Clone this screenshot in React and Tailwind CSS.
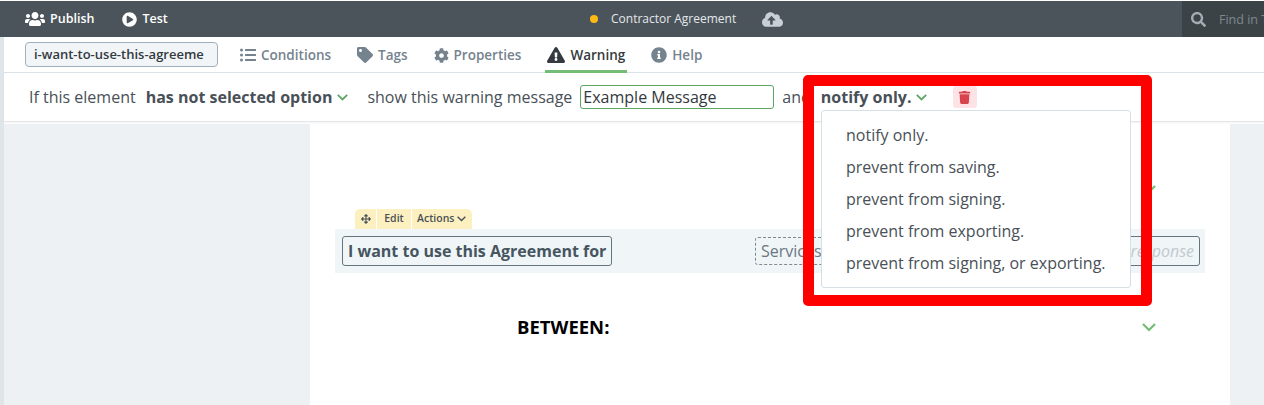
import { FaUsers, FaPlayCircle, FaCloudUploadAlt, FaSearch, FaListUl, FaTag, FaCog, FaExclamationTriangle, FaInfoCircle, FaTrash, FaArrowsAlt } from "react-icons/fa";

const Chev = ({ className }) => (
  <svg viewBox="0 0 14 9" className={className} fill="none" stroke="currentColor" strokeWidth="2.2"><path d="M1 1l6 6 6-6" /></svg>
);

function Tab({ icon, label, active }) {
  return (
    <div className={`flex h-[36px] items-center gap-[5px] px-[2px] pt-[4px] border-b-[3px] ${active ? "border-[#73bd77] text-[#343a40]" : "border-transparent text-[#75838f]"}`}>
      {icon}
      <span className="text-[13.5px] font-semibold">{label}</span>
    </div>
  );
}

const options = ["notify only.", "prevent from saving.", "prevent from signing.", "prevent from exporting.", "prevent from signing, or exporting."];

export default function App() {
  return (
    <div className="relative h-[405px] w-[1264px] overflow-hidden bg-white font-['Open_Sans',sans-serif] text-[#495057]">
      <header className="mt-px flex h-[36px] items-center bg-[#4c545b] text-white">
        <div className="flex w-[590px] items-center">
          <FaUsers className="ml-[25px] text-[20px]" />
          <span className="ml-[5px] text-[12.5px] font-semibold">Publish</span>
          <FaPlayCircle className="ml-[28px] text-[15px]" />
          <span className="ml-[5px] text-[12.5px] font-semibold">Test</span>
        </div>
        <div className="flex flex-1 items-center text-[#e4e8eb]">
          <span className="h-[8px] w-[8px] rounded-full bg-[#fdb913]" />
          <span className="ml-[13px] text-[12px]">Contractor Agreement</span>
          <FaCloudUploadAlt className="ml-[26px] text-[21px] text-[#c9d0d5]" />
        </div>
        <div className="flex h-full w-[82px] items-center overflow-hidden bg-[#3c4347] pl-[9px]">
          <FaSearch className="shrink-0 text-[15px] text-[#a3adb5]" />
          <span className="mt-[3px] ml-[13px] whitespace-nowrap text-[12.5px] text-[#7e888f]">Find in T</span>
        </div>
      </header>

      <div className="flex h-[calc(100%-37px)]">
        <div className="w-[4px] shrink-0 bg-[#dfe6ea]" />
        <div className="flex min-w-0 flex-1 flex-col">
          <div className="flex h-[36px] shrink-0 items-center border-b border-[#dbe3e8]">
            <div className="ml-[21px] flex h-[25px] w-[193px] items-center overflow-hidden rounded-[4px] border border-[#9fb0bd] bg-[#f1f5f8] pl-[8px] text-[13px] font-semibold whitespace-nowrap text-[#343a40]">
              i-want-to-use-this-agreeme
            </div>
            <div className="ml-[20px] flex items-center gap-[22px]">
              <Tab icon={<FaListUl className="text-[16px]" />} label="Conditions" />
              <Tab icon={<FaTag className="text-[16px]" />} label="Tags" />
              <Tab icon={<FaCog className="text-[15px]" />} label="Properties" />
              <Tab active icon={<FaExclamationTriangle className="text-[18px]" />} label="Warning" />
              <Tab icon={<FaInfoCircle className="text-[16px]" />} label="Help" />
            </div>
          </div>

          <div className="flex h-[49px] shrink-0 items-center border-b border-[#e3e5e7] pl-[25px] text-[16px] whitespace-nowrap shadow-[0_1px_2px_rgba(0,0,0,0.05)]">
            <span>If this element</span>
            <span className="ml-[10px] font-bold">has not selected option</span>
            <Chev className="ml-[5px] h-[7px] w-[11px] text-[#5ca663]" />
            <span className="ml-[19px]">show this warning message</span>
            <div className="ml-[8px] flex h-[24px] w-[194px] items-center rounded-[3px] border border-[#5ca663] pl-[2px] text-[#343a40]">Example Message</div>
            <span className="ml-[8px]">and</span>
            <span className="ml-[10px] font-bold">notify only.</span>
            <Chev className="ml-[4px] h-[7px] w-[11px] text-[#5ca663]" />
            <div className="ml-[26px] flex h-[22px] w-[24px] items-center justify-center rounded-[3px] bg-[#fde3e5]">
              <FaTrash className="text-[13px] text-[#d9434e]" />
            </div>
          </div>

          <div className="mt-[2px] flex min-h-0 flex-1 bg-[#edf1f4]">
            <div className="w-[306px] shrink-0" />
            <main className="w-[920px] bg-white">
              <div className="flex h-[85px] items-end justify-end pr-[74px] pb-[15px]">
                <Chev className="h-[9px] w-[14px] text-[#73bd77]" />
              </div>
              <div className="ml-[25px] h-[20px]">
                <div className="ml-[20px] flex h-[20px] w-[117px] items-center rounded-t-[5px] bg-[#fdf0c0] text-[10.5px] font-semibold text-[#495057]">
                  <span className="flex w-[21px] justify-center"><FaArrowsAlt className="text-[10px]" /></span>
                  <span className="flex h-full w-[35px] items-center justify-center border-l border-white">Edit</span>
                  <span className="flex h-full flex-1 items-center gap-[3px] border-l border-white pl-[5px]">Actions<Chev className="h-[6px] w-[9px]" /></span>
                </div>
              </div>
              <div className="ml-[25px] flex h-[44px] w-[870px] items-center bg-[#f0f5f8]">
                <div className="ml-[7px] flex h-[30px] w-[270px] items-center whitespace-nowrap rounded-[3px] border border-[#63757f] pl-[5px] text-[16px] font-bold text-[#46555f]">I want to use this Agreement for</div>
                <div className="ml-[143px] flex h-[28px] w-[120px] items-center rounded-[3px] border border-dashed border-[#7d8890] pl-[5px] text-[16px] text-[#6a7882]">Services</div>
                <div className="ml-auto mr-[5px] flex h-[30px] w-[80px] items-center justify-end rounded-[3px] border border-[#63757f] pr-[5px] text-[16px] text-[#c3c9cd] italic">response</div>
              </div>
              <div className="flex h-[110px] pt-[43px]">
                <div className="ml-[207px] text-[18.5px] leading-[22px] font-bold text-black">BETWEEN:</div>
                <Chev className="ml-[533px] mt-[7px] h-[9px] w-[14px] text-[#73bd77]" />
              </div>
            </main>
          </div>
        </div>
      </div>

      <div className="absolute top-[75px] left-[803px] h-[231px] w-[349px] rounded-[5px] border-[11px] border-[#ff0000]" />
      <div className="absolute top-[110px] left-[821px] flex h-[178px] w-[310px] flex-col rounded-[3px] border border-[#d5dfe5] bg-white pt-[8px] pl-[24px] text-[16px]">
        {options.map((o) => (
          <div key={o} className="h-[32px] leading-[32px] whitespace-nowrap">{o}</div>
        ))}
      </div>
    </div>
  );
}
